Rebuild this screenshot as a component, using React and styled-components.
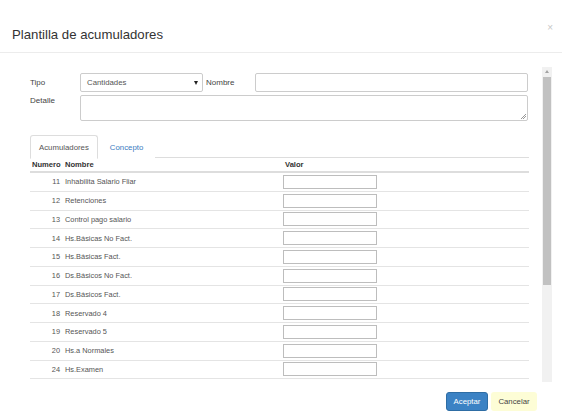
import React from "react";
import styled, { createGlobalStyle } from "styled-components";

// Global reset
const GlobalStyle = createGlobalStyle`
  html, body {
    margin: 0;
    padding: 0;
    background: #fff;
  }
  * { box-sizing: border-box; }
`;

const rows = [
  [11, "Inhabilita Salario Fliar"],
  [12, "Retenciones"],
  [13, "Control pago salario"],
  [14, "Hs.Básicas No Fact."],
  [15, "Hs.Básicas Fact."],
  [16, "Ds.Básicos No Fact."],
  [17, "Ds.Básicos Fact."],
  [18, "Reservado 4"],
  [19, "Reservado 5"],
  [20, "Hs.a Normales"],
  [24, "Hs.Examen"],
];

// Modal shell
const Modal = styled.div`
  width: 562px;
  height: 420px;
  background: #fff;
  display: flex;
  flex-direction: column;
  font-family: "Liberation Sans", Arial, sans-serif;
  color: #333;
  overflow: hidden;
`;

const Header = styled.div`
  height: 53px;
  flex-shrink: 0;
  border-bottom: 1px solid #ececec;
  display: flex;
  justify-content: space-between;
  padding: 16px 9px 0 12px;
  align-items: center;
`;

const Title = styled.h4`
  margin: 0;
  font-size: 13.2px;
  font-weight: normal;
  color: #333;
`;

const Close = styled.span`
  align-self: flex-start;
  margin-top: 7px;
  font-size: 10px;
  color: #c8c8c8;
  line-height: 1;
`;

const Body = styled.div`
  height: 330px;
  flex-shrink: 0;
  display: flex;
`;

const Content = styled.div`
  width: 542px;
  padding: 20px 13px 0 30px;
  overflow: hidden;
`;

// Fake scrollbar drawing
const Scrollbar = styled.div`
  width: 10px;
  margin-top: 14px;
  height: 315px;
  background: #f1f1f1;
  display: flex;
  flex-direction: column;
  align-items: center;
`;

const ScrollArrow = styled.div`
  height: 9px;
  display: flex;
  align-items: center;
  justify-content: center;
  &::before {
    content: "";
    border-left: 2.5px solid transparent;
    border-right: 2.5px solid transparent;
    border-bottom: 3px solid #a3a3a3;
  }
`;

const ScrollThumb = styled.div`
  width: 8px;
  height: 208px;
  margin-top: 1px;
  background: #c1c1c1;
`;

// Form
const FormRow = styled.div`
  display: grid;
  grid-template-columns: 50px 123px 52px 273px;
  align-items: start;
  margin-bottom: ${(p) => p.$mb || 0}px;
`;

const DetailRow = styled.div`
  display: grid;
  grid-template-columns: 50px 448px;
  align-items: start;
`;

const Label = styled.label`
  font-size: 8px;
  color: #444;
  padding-top: ${(p) => p.$pt || 5}px;
  padding-left: ${(p) => p.$pl || 0}px;
`;

const Select = styled.div`
  height: 19px;
  border: 1px solid #ccc;
  border-radius: 2px;
  font-size: 7.8px;
  color: #555;
  display: flex;
  align-items: center;
  justify-content: space-between;
  padding: 0 4px 0 6px;
  &::after {
    content: "";
    border-left: 2.5px solid transparent;
    border-right: 2.5px solid transparent;
    border-top: 4px solid #222;
  }
`;

const Input = styled.div`
  height: 19px;
  border: 1px solid #ccc;
  border-radius: 2px;
`;

const TextArea = styled.div`
  position: relative;
  height: 26px;
  border: 1px solid #ccc;
  border-radius: 2px;
  &::after {
    content: "";
    position: absolute;
    right: 1px;
    bottom: 1px;
    width: 5px;
    height: 5px;
    background: linear-gradient(135deg, transparent 45%, #999 45%, #999 55%, transparent 55%, transparent 70%, #999 70%, #999 80%, transparent 80%);
  }
`;

// Tabs
const Tabs = styled.div`
  margin-top: 14px;
  display: flex;
  height: 23px;
  border-bottom: 1px solid #ddd;
`;

const Tab = styled.div`
  height: 24px;
  padding: 0 ${(p) => (p.$active ? 8 : 11)}px;
  display: flex;
  align-items: center;
  font-size: 7.8px;
  color: ${(p) => (p.$active ? "#555" : "#3a7bbf")};
  background: #fff;
  border: 1px solid ${(p) => (p.$active ? "#ddd" : "transparent")};
  border-bottom-color: ${(p) => (p.$active ? "#fff" : "transparent")};
  border-radius: 3px 3px 0 0;
`;

// Table
const Table = styled.div`
  font-size: 7.4px;
`;

const HeadRow = styled.div`
  display: grid;
  grid-template-columns: 33px 220px 1fr;
  height: 15px;
  align-items: center;
  border-bottom: 2px solid #ddd;
  font-weight: bold;
  font-size: 7.6px;
  color: #333;
  padding-left: 2px;
`;

const Row = styled.div`
  display: grid;
  grid-template-columns: 30px 223px 1fr;
  height: 18.75px;
  align-items: center;
  border-bottom: 1px solid #e4e4e4;
  color: #555;
`;

const Num = styled.span`
  text-align: right;
`;

const Name = styled.span`
  padding-left: 5px;
`;

const CellInput = styled.div`
  width: 94px;
  height: 14px;
  border: 1px solid #bdbdbd;
`;

// Footer
const Footer = styled.div`
  flex: 1;
  display: flex;
  justify-content: flex-end;
  align-items: flex-start;
  gap: 3px;
  padding: 9px 25px 0 0;
`;

const Button = styled.button`
  height: 19px;
  width: ${(p) => (p.$primary ? 42 : 46)}px;
  padding: 0;
  font-family: inherit;
  font-size: 7.8px;
  border-radius: 3px;
  border: 1px solid ${(p) => (p.$primary ? "#2e6da4" : "transparent")};
  background: ${(p) => (p.$primary ? "#3b82c4" : "#fdfdd6")};
  color: ${(p) => (p.$primary ? "#fff" : "#444")};
`;

const App = () => {
  return (
    <>
      <GlobalStyle />
      <Modal>
        {/* Header */}
        <Header>
          <Title>Plantilla de acumuladores</Title>
          <Close>×</Close>
        </Header>
        <Body>
          <Content>
            {/* Form */}
            <FormRow $mb={3}>
              <Label>Tipo</Label>
              <Select>Cantidades</Select>
              <Label $pl={3}>Nombre</Label>
              <Input />
            </FormRow>
            <DetailRow>
              <Label $pt={1}>Detalle</Label>
              <TextArea />
            </DetailRow>
            {/* Tabs */}
            <Tabs>
              <Tab $active>Acumuladores</Tab>
              <Tab>Concepto</Tab>
            </Tabs>
            {/* Table */}
            <Table>
              <HeadRow>
                <span>Numero</span>
                <span>Nombre</span>
                <span>Valor</span>
              </HeadRow>
              {rows.map(([n, name]) => (
                <Row key={n}>
                  <Num>{n}</Num>
                  <Name>{name}</Name>
                  <CellInput />
                </Row>
              ))}
            </Table>
          </Content>
          <Scrollbar>
            <ScrollArrow />
            <ScrollThumb />
          </Scrollbar>
        </Body>
        <Footer>
          <Button $primary>Aceptar</Button>
          <Button>Cancelar</Button>
        </Footer>
      </Modal>
    </>
  );
};

export default App;
